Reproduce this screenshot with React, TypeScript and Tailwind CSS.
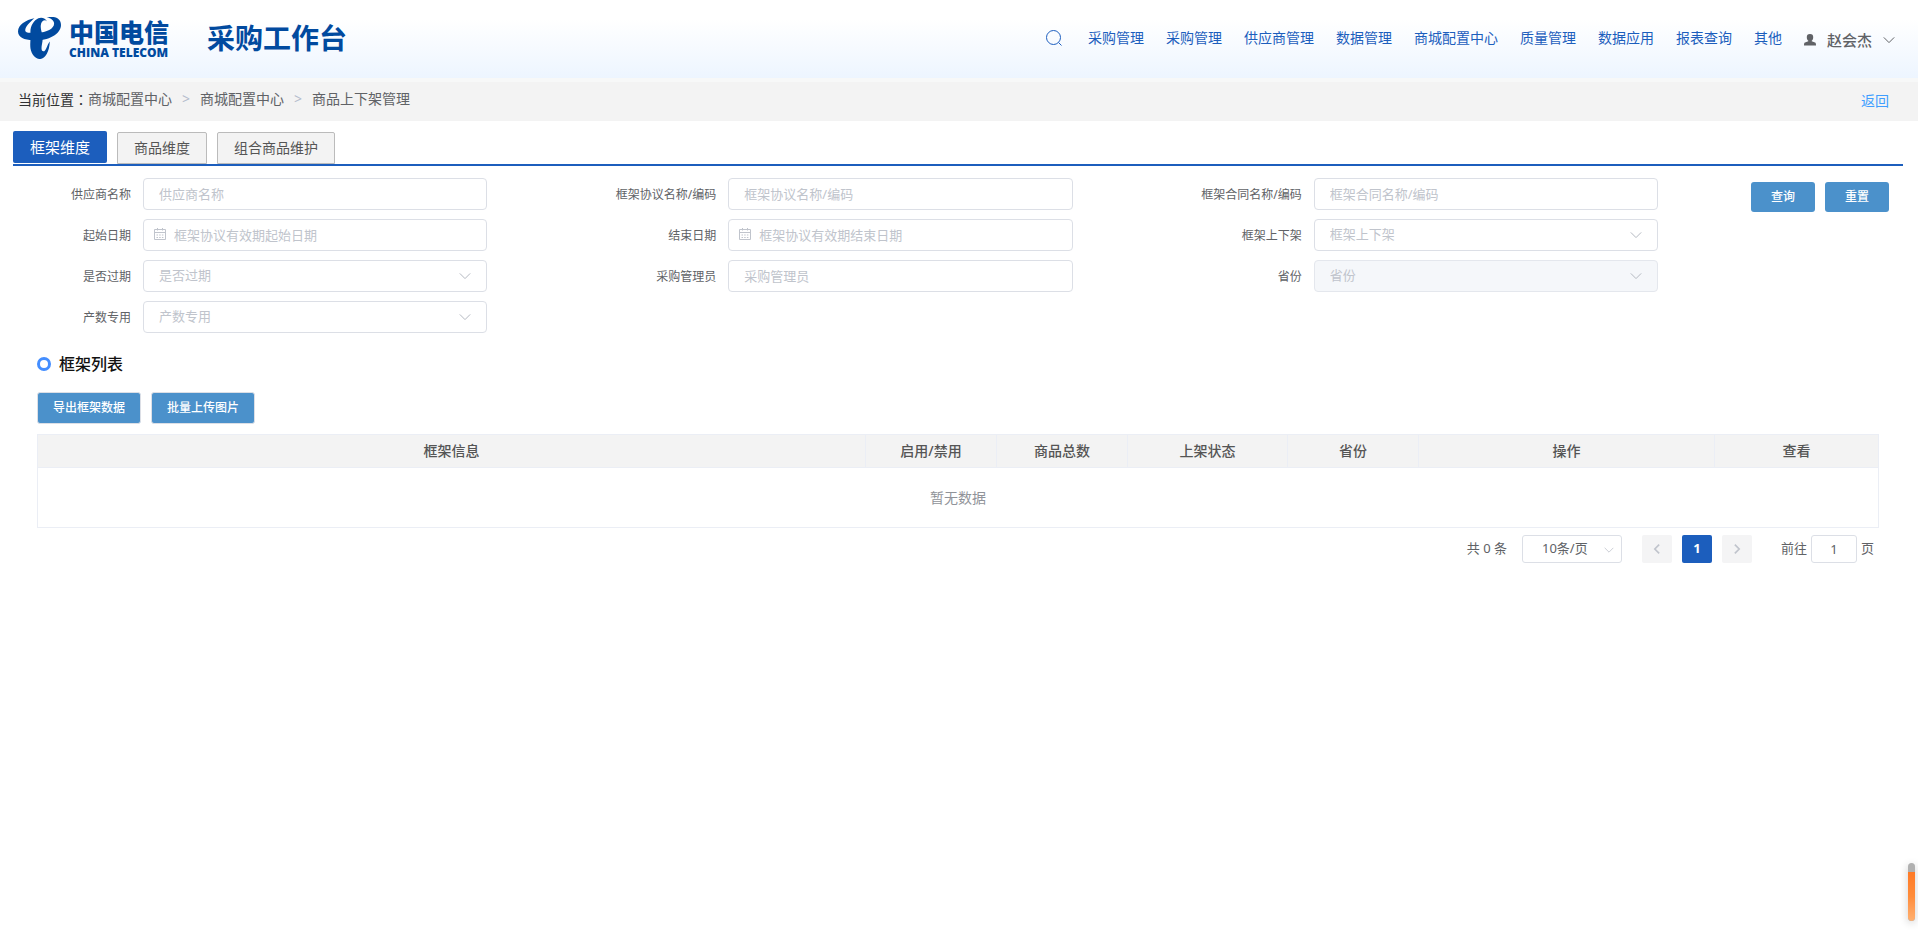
import React, { useState } from 'react'

interface Field {
  id: string
  label: string
  placeholder: string
  type: 'input' | 'date' | 'select'
  disabled?: boolean
}

const navItems = ['采购管理', '采购管理', '供应商管理', '数据管理', '商城配置中心', '质量管理', '数据应用', '报表查询', '其他']

const tabs = ['框架维度', '商品维度', '组合商品维护']

const fields: Field[] = [
  { id: 'supplier', label: '供应商名称', placeholder: '供应商名称', type: 'input' },
  { id: 'agreement', label: '框架协议名称/编码', placeholder: '框架协议名称/编码', type: 'input' },
  { id: 'contract', label: '框架合同名称/编码', placeholder: '框架合同名称/编码', type: 'input' },
  { id: 'startDate', label: '起始日期', placeholder: '框架协议有效期起始日期', type: 'date' },
  { id: 'endDate', label: '结束日期', placeholder: '框架协议有效期结束日期', type: 'date' },
  { id: 'shelf', label: '框架上下架', placeholder: '框架上下架', type: 'select' },
  { id: 'expired', label: '是否过期', placeholder: '是否过期', type: 'select' },
  { id: 'manager', label: '采购管理员', placeholder: '采购管理员', type: 'input' },
  { id: 'province', label: '省份', placeholder: '省份', type: 'select', disabled: true },
  { id: 'special', label: '产数专用', placeholder: '产数专用', type: 'select' }
]

const columns = [
  { title: '框架信息', width: '' },
  { title: '启用/禁用', width: 'w-[131px]' },
  { title: '商品总数', width: 'w-[131px]' },
  { title: '上架状态', width: 'w-[160px]' },
  { title: '省份', width: 'w-[131px]' },
  { title: '操作', width: 'w-[296px]' },
  { title: '查看', width: 'w-[164px]' }
]

const Chevron: React.FC<{ className?: string }> = ({ className = '' }) => (
  <svg viewBox="0 0 12 12" fill="none" stroke="currentColor" aria-hidden="true" className={className}>
    <path d="M0.8 3.4 6 8.6l5.2-5.2" />
  </svg>
)

const CalendarIcon = () => (
  <svg viewBox="0 0 14 14" fill="none" stroke="currentColor" aria-hidden="true" className="size-3.5">
    <path d="M1.500 2.500h11v10h-11zM1.500 5.500h11M4.500 1v2.500M9.500 1v2.500" />
    <path d="M3.500 8h7M3.500 10.500h7" strokeDasharray="1.500 1.200" />
  </svg>
)

const Logo = () => (
  <a href="#" aria-label="中国电信" className="flex items-center gap-2 text-[#014a9f]">
    <svg viewBox="12 10 131 128" fill="currentColor" aria-hidden="true" className="h-[42px] w-[43px]">
      <path d="M62 14C36 19 12 34 12 54c0 20 24 28 54 26l-3-23c-15 2-29 2-29-6 0-11 13-24 28-37z" />
      <path d="M99 10c24-3 44 3 44 24 0 28-40 49-86 48l1-25c35 4 64-9 64-27 0-9-9-16-23-20z" />
      <path d="M101 24c-5-10-17-15-27-10C60 21 48 38 50 60c1 16-2 30 0 46 3 17 14 31 28 32 16 1 29-19 31-53-8 9-10 26-17 29-8 3-10-6-7-21 3-14 3-26-1-37-4-12-4-25 2-32 5-5 11-5 15 0z" />
    </svg>
    <span className="flex flex-col">
      <span className="text-[25px] leading-[30px] font-black">中国电信</span>
      <span className="font-['Open_Sans',sans-serif] text-[12px] leading-3 font-extrabold">CHINA TELECOM</span>
    </span>
  </a>
)

const FormField: React.FC<{ field: Field }> = ({ field }) => {
  const box = 'h-8 w-full rounded border border-[#dcdfe6] text-[13px] outline-none placeholder:text-[#c0c4cc]'

  return (
    <div className="flex items-center">
      <label htmlFor={field.id} className="w-[130px] shrink-0 pt-px pr-3 text-right text-xs text-[#606266]">
        {field.label}
      </label>
      <div className="relative min-w-0 flex-1">
        {field.type === 'select' ? (
          <>
            <select
              id={field.id}
              disabled={field.disabled}
              defaultValue=""
              className={`${box} appearance-none bg-white px-[15px] pb-px text-[#c0c4cc] disabled:border-[#e4e7ed] disabled:bg-[#f5f7fa] disabled:opacity-100`}
            >
              <option value="">{field.placeholder}</option>
            </select>
            <Chevron className="pointer-events-none absolute top-2.5 right-4 size-3 text-[#b4b8c0]" />
          </>
        ) : (
          <input
            id={field.id}
            type="text"
            placeholder={field.placeholder}
            className={`${box} pb-px ${field.type === 'date' ? 'pl-[30px]' : 'pl-[15px]'}`}
          />
        )}
        {field.type === 'date' && (
          <span className="pointer-events-none absolute top-2 left-2.5 text-[#c0c4cc]">
            <CalendarIcon />
          </span>
        )}
      </div>
    </div>
  )
}

const Header = () => (
  <header className="flex h-[82px] items-center justify-between border-b-4 border-[#f7f8f8] bg-linear-to-b from-white from-25% to-[#edf5ff] pr-[23px] pb-0.5 pl-[18px]">
    <div className="flex items-center gap-[38px]">
      <Logo />
      <h1 className="text-[28px] leading-8 font-bold text-[#014a9f]">采购工作台</h1>
    </div>
    <div className="flex items-center">
      <button type="button" aria-label="搜索" className="mr-[26px] text-[#1e5fbf]">
        <svg viewBox="0 0 16 16" fill="none" stroke="currentColor" className="size-4">
          <circle cx="7.500" cy="7.500" r="7" />
          <path d="m12.500 12.500 3 3" />
        </svg>
      </button>
      <nav className="flex gap-[22px] text-sm text-[#1c5ebd]">
        {navItems.map((item, i) => (
          <a key={i} href="#">{item}</a>
        ))}
      </nav>
      <button type="button" className="ml-[21px] flex items-center pt-1 text-[15px] leading-5 font-medium text-[#606266]">
        <svg viewBox="0 0 14 14" fill="currentColor" aria-hidden="true" className="mr-2.5 size-3.5">
          <path d="M7 1a3.200 3.200 0 0 1 3.200 3.400C10.200 6 9.500 7 8.700 7.700v.6l3.300 1.300c.8.400 1 1 1 2.900H1c0-1.900.2-2.500 1-2.900l3.300-1.300v-.6C4.500 7 3.800 6 3.800 4.400A3.200 3.200 0 0 1 7 1z" />
        </svg>
        赵会杰
        <Chevron className="ml-[11px] size-3" />
      </button>
    </div>
  </header>
)

const Breadcrumb = () => (
  <div className="flex h-[39px] items-center justify-between bg-[#f3f3f3] pr-[29px] pb-1.5 pl-[18px] text-sm">
    <div className="flex items-center text-[#606266]">
      <span className="font-['Noto_Sans_CJK_TC',sans-serif] text-[#303133]">当前位置：</span>
      <a href="#">商城配置中心</a>
      <span className="w-7 text-center text-sm text-[#b4bccc]">&gt;</span>
      <a href="#">商城配置中心</a>
      <span className="w-7 text-center text-sm text-[#b4bccc]">&gt;</span>
      <span>商品上下架管理</span>
    </div>
    <a href="#" className="pt-1 text-[#409eff]">返回</a>
  </div>
)

const Pagination = () => (
  <div className="mt-[7px] flex items-center justify-end pr-[5px] text-[13px] text-[#606266]">
    <span className="mr-[15px]">共 0 条</span>
    <div className="relative mr-5">
      <select aria-label="每页条数" className="h-7 w-[100px] appearance-none rounded-[3px] border border-[#dcdfe6] bg-white pl-[19px] outline-none">
        <option>10条/页</option>
      </select>
      <Chevron className="pointer-events-none absolute top-2.5 right-2 size-2.5 text-[#c0c4cc]" />
    </div>
    <div className="flex gap-2.5">
      <button type="button" disabled aria-label="上一页" className="flex h-7 w-[30px] items-center justify-center rounded-xs bg-[#f4f4f5] text-[#c0c4cc]">
        <Chevron className="size-2.5 rotate-90 stroke-2" />
      </button>
      <button type="button" className="h-7 w-[30px] rounded-xs bg-[#1c5ebd] font-bold text-white">1</button>
      <button type="button" disabled aria-label="下一页" className="flex h-7 w-[30px] items-center justify-center rounded-xs bg-[#f4f4f5] text-[#c0c4cc]">
        <Chevron className="size-2.5 -rotate-90 stroke-2" />
      </button>
    </div>
    <label className="ml-[29px] flex items-center gap-1">
      前往
      <input type="text" defaultValue="1" className="h-7 w-[46px] rounded-[3px] border border-[#dcdfe6] text-center outline-none" />
      页
    </label>
  </div>
)

export default function App() {
  const [activeTab, setActiveTab] = useState(0)

  return (
    <div className="min-h-screen bg-white font-['Noto_Sans','Noto_Sans_CJK_SC',sans-serif]">
      <Header />
      <Breadcrumb />

      <main className="pt-2.5 pr-[15px] pl-[13px]">
        <div role="tablist" className="flex items-end gap-2.5 border-b-2 border-[#1c5ebd]">
          {tabs.map((tab, i) => (
            <button
              key={tab}
              type="button"
              role="tab"
              aria-selected={activeTab === i}
              onClick={() => setActiveTab(i)}
              className={
                activeTab === i
                  ? 'mb-px h-8 rounded-xs bg-[#1c5ebd] px-[17px] text-[15px] text-white'
                  : 'h-8 rounded-t-xs border border-[#bbb] bg-[#f3f3f3] px-4 text-sm text-[#555]'
              }
            >
              {tab}
            </button>
          ))}
        </div>

        <form className="flex items-start gap-[93px] pt-3" onSubmit={(e) => e.preventDefault()}>
          <div className="grid flex-1 grid-cols-3 gap-x-[111px] gap-y-[9px]">
            {fields.map((field) => (
              <FormField key={field.id} field={field} />
            ))}
          </div>
          <div className="mt-1 flex gap-2.5 pr-3.5">
            <button type="submit" className="h-[30px] w-16 rounded-[3px] bg-[#4b91cb] text-xs font-medium text-white">查询</button>
            <button type="reset" className="h-[30px] w-16 rounded-[3px] bg-[#4b91cb] text-xs font-medium text-white">重置</button>
          </div>
        </form>

        <section className="mt-[19px] px-6">
          <h2 className="flex items-center gap-2 text-base leading-6 font-medium text-[#111]">
            <span className="size-3.5 rounded-full border-[3px] border-[#448eff]" />
            框架列表
          </h2>
          <div className="mt-4 flex gap-2.5">
            <button type="button" className="h-8 rounded-[3px] border border-[#dcdfe6] bg-[#4b91cb] px-[15px] text-xs font-medium text-white">导出框架数据</button>
            <button type="button" className="h-8 rounded-[3px] border border-[#dcdfe6] bg-[#4b91cb] px-[15px] text-xs font-medium text-white">批量上传图片</button>
          </div>

          <table className="mt-2.5 w-full table-fixed border-collapse border border-[#ebeef5] text-sm">
            <thead>
              <tr className="h-[33px] bg-[#f3f3f3] text-[#555]">
                {columns.map((col) => (
                  <th key={col.title} className={`border border-[#ebeef5] font-medium ${col.width}`}>{col.title}</th>
                ))}
              </tr>
            </thead>
            <tbody>
              <tr className="h-[60px]">
                <td colSpan={columns.length} className="text-center text-[#909399]">暂无数据</td>
              </tr>
            </tbody>
          </table>
          <Pagination />
        </section>
      </main>

      {/* floating scroll handle */}
      <div className="fixed right-[3px] bottom-3 h-[58px] w-[7px] overflow-hidden rounded-full bg-[#b0b0b0] pt-[9px] shadow-[0_2px_8px_rgba(0,0,0,0.2)]">
        <div className="h-full rounded-b-full bg-linear-to-b from-[#ff7a26] via-[#ff8c3a] to-[#ffb070]" />
      </div>
    </div>
  )
}
